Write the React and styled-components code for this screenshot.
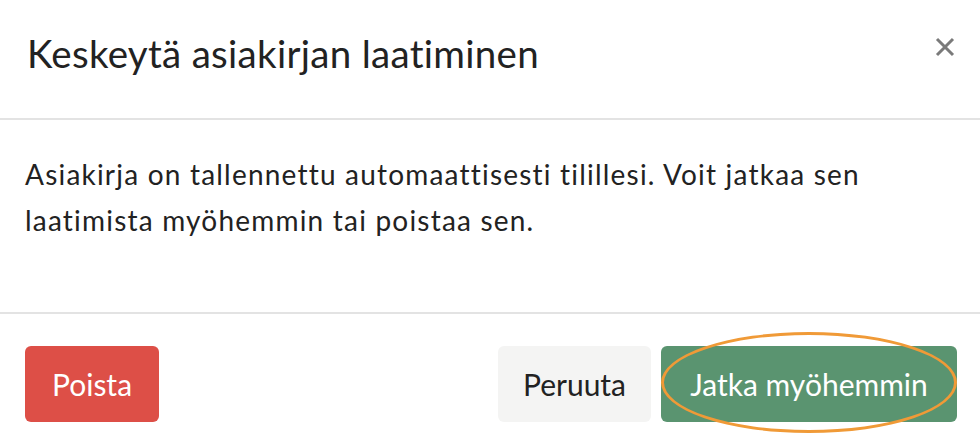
import React from "react"
import styled, { createGlobalStyle } from "styled-components"

const Global = createGlobalStyle`
  html, body {
    margin: 0;
    padding: 0;
    background: #fff;
  }
  body {
    font-family: "Lato", "Open Sans", sans-serif;
    color: #222;
  }
`

const Modal = styled.div`
  width: 980px;
  height: 438px;
  display: flex;
  flex-direction: column;
  background: #fff;
  overflow: hidden;
`

const Header = styled.div`
  height: 120px;
  display: flex;
  align-items: flex-start;
  justify-content: space-between;
  padding: 30px 25px 0 27px;
  box-sizing: border-box;
  border-bottom: 2px solid #e3e3e3;
`

const Title = styled.h1`
  margin: 0;
  font-size: 38.5px;
  line-height: 1.2;
  font-weight: 400;
  letter-spacing: 0.3px;
  color: #222;
`

const Close = styled.button`
  border: none;
  background: transparent;
  padding: 0;
  margin-top: 7px;
  width: 20px;
  height: 20px;
  cursor: pointer;
  display: flex;
  align-items: center;
  justify-content: center;
`

const Body = styled.div`
  height: 194px;
  box-sizing: border-box;
  padding: 31px 25px 0;
  border-bottom: 2px solid #e3e3e3;
`

const Text = styled.p`
  margin: 0;
  font-size: 28px;
  line-height: 46px;
  letter-spacing: 1.2px;
  max-width: 880px;
  color: #222;
`

const Footer = styled.div`
  flex: 1;
  display: flex;
  align-items: flex-start;
  padding: 32px 23px 0 25px;
  gap: 10px;
`

const Spacer = styled.div`
  flex: 1;
`

const Button = styled.button`
  position: relative;
  height: 76px;
  width: ${p => p.$w}px;
  padding: 0;
  border: none;
  border-radius: 6px;
  font-family: inherit;
  font-size: 30px;
  cursor: pointer;
  background: ${p => p.$bg};
  color: ${p => p.$fg};
`

const Ring = styled.span`
  position: absolute;
  left: 0;
  top: -14px;
  width: 296px;
  height: 101px;
  border: 3px solid #f09a37;
  border-radius: 50%;
  box-sizing: border-box;
  pointer-events: none;
`

export default function App() {
  return (
    <>
      <Global />
      <Modal>
        <Header>
          <Title>Keskeytä asiakirjan laatiminen</Title>
          <Close aria-label="Sulje">
            <svg width="20" height="20" viewBox="0 0 20 20">
              <path d="M2 2 L18 18 M18 2 L2 18" stroke="#7a7a7a" strokeWidth="3" />
            </svg>
          </Close>
        </Header>
        <Body>
          <Text>
            Asiakirja on tallennettu automaattisesti tilillesi. Voit jatkaa sen laatimista myöhemmin tai poistaa sen.
          </Text>
        </Body>
        <Footer>
          <Button $w={134} $bg="#dd4f47" $fg="#fff">Poista</Button>
          <Spacer />
          <Button $w={153} $bg="#f4f4f3" $fg="#222">Peruuta</Button>
          <Button $w={296} $bg="#5a9470" $fg="#fff">
            Jatka myöhemmin
            <Ring />
          </Button>
        </Footer>
      </Modal>
    </>
  )
}
